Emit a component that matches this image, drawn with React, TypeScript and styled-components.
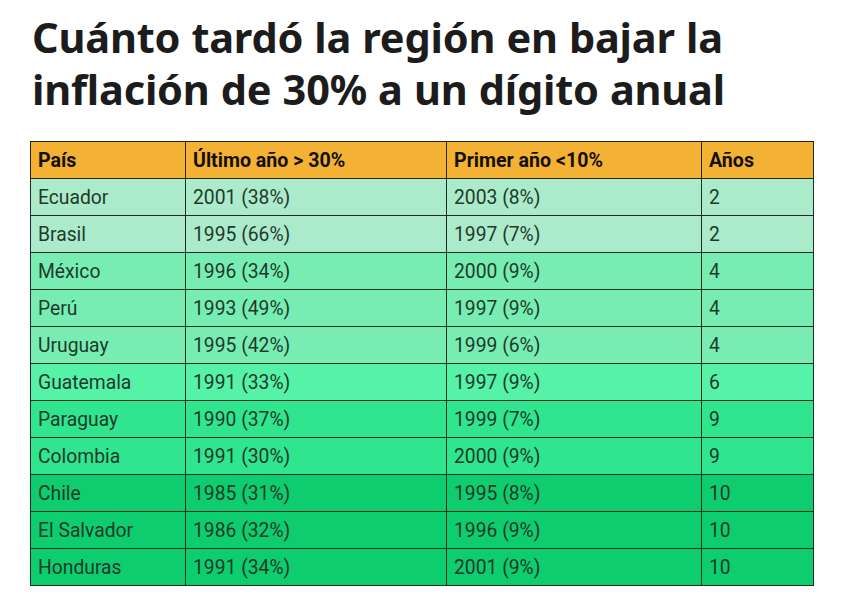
import React from "react";
import styled, { createGlobalStyle } from "styled-components";

const Global = createGlobalStyle`
  html, body { margin: 0; padding: 0; background: #ffffff; }
  body { font-family: Roboto, "Liberation Sans", sans-serif; }
`;

const Page = styled.div`
  width: 843px;
  height: 598px;
  padding: 11px 30px 0 30px;
  box-sizing: border-box;
  background: #ffffff;
`;

const Title = styled.h1`
  margin: 0 0 26px 2px;
  font-family: "Noto Sans", "Open Sans", sans-serif;
  font-weight: 700;
  font-size: 41.5px;
  line-height: 52px;
  color: #1c1c1c;
  letter-spacing: -0.2px;
  word-spacing: 0.6px;
`;

const Table = styled.table`
  width: 783px;
  border-collapse: collapse;
  table-layout: fixed;
  font-family: Roboto, "Liberation Sans", sans-serif;
`;

const HeadRow = styled.tr`
  background: #f3b233;
  height: 37px;
`;

const Th = styled.th<{ $w: number }>`
  width: ${(p) => p.$w}px;
  box-sizing: border-box;
  border: 1px solid #2a2418;
  padding: 0 7px;
  text-align: left;
  font-weight: 700;
  font-size: 19.6px;
  color: #140f05;
`;

const Row = styled.tr<{ $bg: string }>`
  background: ${(p) => p.$bg};
  height: 37px;
`;

const Td = styled.td`
  border: 1px solid #17301f;
  padding: 0 7px;
  font-size: 19.3px;
  color: #1f3a2b;
  white-space: nowrap;
`;

const colors: Record<number, string> = {
  2: "#abebcc",
  4: "#77edb4",
  6: "#56f2a8",
  9: "#2fe58e",
  10: "#0dcd6e",
};

const rows: [string, string, string, number][] = [
  ["Ecuador", "2001 (38%)", "2003 (8%)", 2],
  ["Brasil", "1995 (66%)", "1997 (7%)", 2],
  ["México", "1996 (34%)", "2000 (9%)", 4],
  ["Perú", "1993 (49%)", "1997 (9%)", 4],
  ["Uruguay", "1995 (42%)", "1999 (6%)", 4],
  ["Guatemala", "1991 (33%)", "1997 (9%)", 6],
  ["Paraguay", "1990 (37%)", "1999 (7%)", 9],
  ["Colombia", "1991 (30%)", "2000 (9%)", 9],
  ["Chile", "1985 (31%)", "1995 (8%)", 10],
  ["El Salvador", "1986 (32%)", "1996 (9%)", 10],
  ["Honduras", "1991 (34%)", "2001 (9%)", 10],
];

export default function App() {
  return (
    <Page>
      <Global />
      <Title>
        Cuánto tardó la región en bajar la
        <br />
        inflación de 30% a un dígito anual
      </Title>
      <Table>
        <thead>
          <HeadRow>
            <Th $w={155}>País</Th>
            <Th $w={261}>Último año &gt; 30%</Th>
            <Th $w={255}>Primer año &lt;10%</Th>
            <Th $w={112}>Años</Th>
          </HeadRow>
        </thead>
        <tbody>
          {rows.map(([p, a, b, n]) => (
            <Row key={p} $bg={colors[n]}>
              <Td>{p}</Td>
              <Td>{a}</Td>
              <Td>{b}</Td>
              <Td>{n}</Td>
            </Row>
          ))}
        </tbody>
      </Table>
    </Page>
  );
}
